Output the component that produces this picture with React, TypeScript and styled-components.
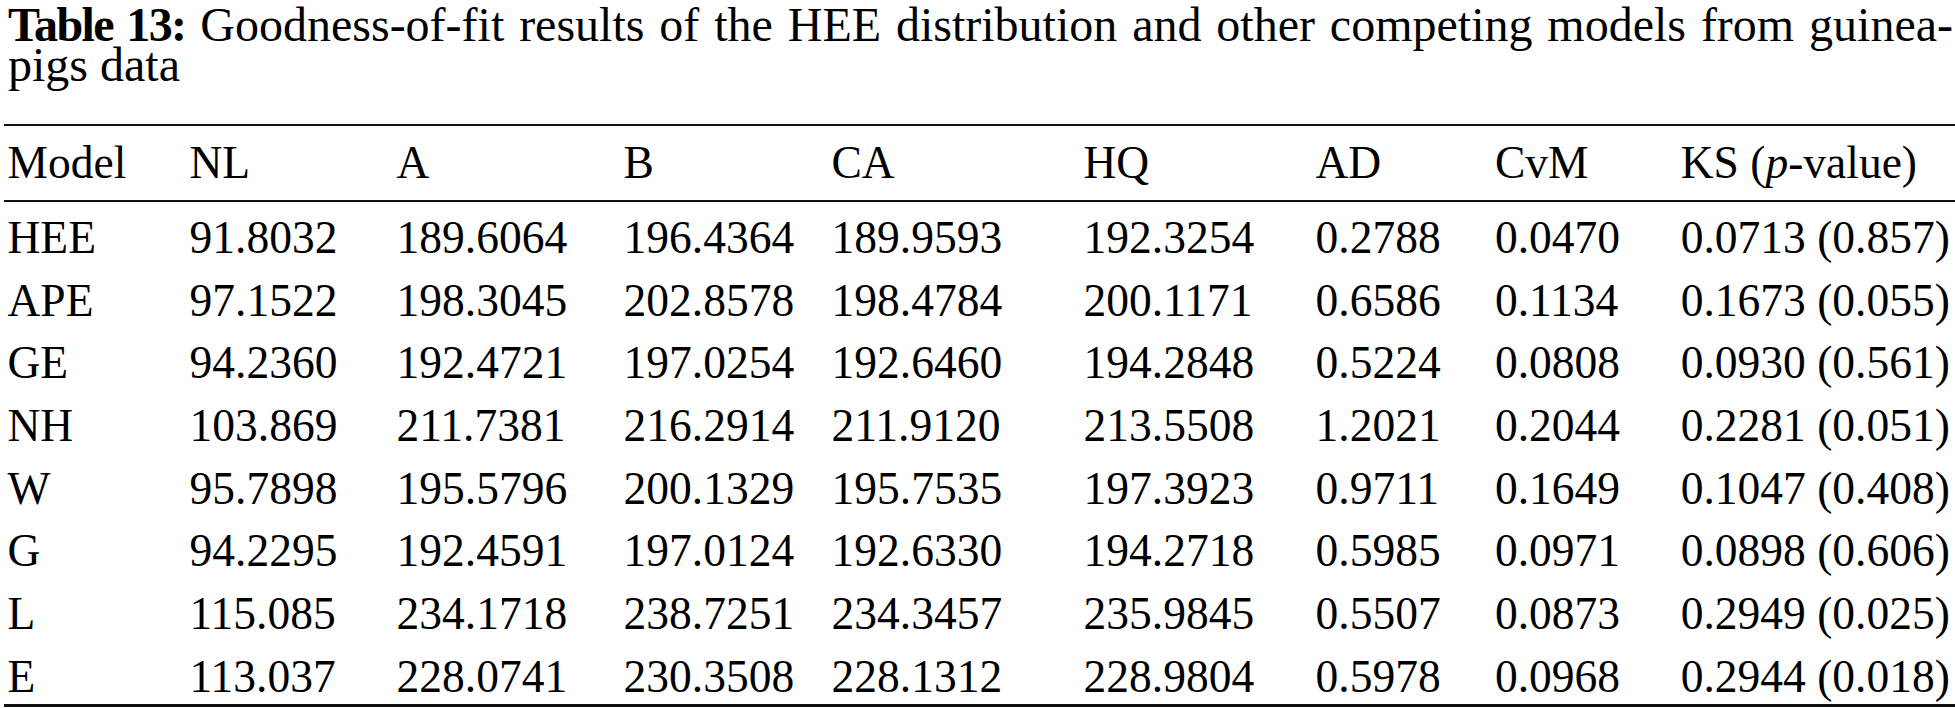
import styled, { createGlobalStyle } from "styled-components";

const GlobalStyle = createGlobalStyle`
  html, body {
    margin: 0;
    padding: 0;
    background: #ffffff;
    overflow: hidden;
  }
`;

const COLUMNS = "182px 207px 227px 208px 252px 232px 179.4px 185.8px 1fr";

const rows: string[][] = [
  ["HEE", "91.8032", "189.6064", "196.4364", "189.9593", "192.3254", "0.2788", "0.0470", "0.0713 (0.857)"],
  ["APE", "97.1522", "198.3045", "202.8578", "198.4784", "200.1171", "0.6586", "0.1134", "0.1673 (0.055)"],
  ["GE", "94.2360", "192.4721", "197.0254", "192.6460", "194.2848", "0.5224", "0.0808", "0.0930 (0.561)"],
  ["NH", "103.869", "211.7381", "216.2914", "211.9120", "213.5508", "1.2021", "0.2044", "0.2281 (0.051)"],
  ["W", "95.7898", "195.5796", "200.1329", "195.7535", "197.3923", "0.9711", "0.1649", "0.1047 (0.408)"],
  ["G", "94.2295", "192.4591", "197.0124", "192.6330", "194.2718", "0.5985", "0.0971", "0.0898 (0.606)"],
  ["L", "115.085", "234.1718", "238.7251", "234.3457", "235.9845", "0.5507", "0.0873", "0.2949 (0.025)"],
  ["E", "113.037", "228.0741", "230.3508", "228.1312", "228.9804", "0.5978", "0.0968", "0.2944 (0.018)"],
];

export default function App() {
  return (
    <Page>
      <GlobalStyle />
      <Caption>
        <CaptionLine $justify>
          <Label>Table 13:</Label> Goodness-of-fit results of the HEE
          distribution and other competing models from guinea-
        </CaptionLine>
        <CaptionLine>pigs data</CaptionLine>
      </Caption>
      <Table>
        <HeaderRow>
          <Cell>Model</Cell>
          <Cell>NL</Cell>
          <Cell>A</Cell>
          <Cell>B</Cell>
          <Cell>CA</Cell>
          <Cell>HQ</Cell>
          <Cell>AD</Cell>
          <Cell>CvM</Cell>
          <Cell>
            KS (<i>p</i>-value)
          </Cell>
        </HeaderRow>
        <Body>
          {rows.map((row) => (
            <Row key={row[0]}>
              {row.map((value, i) => (
                <Cell key={i}>{value}</Cell>
              ))}
            </Row>
          ))}
        </Body>
      </Table>
    </Page>
  );
}

const Page = styled.div`
  width: 1955px;
  color: #000000;
  font-family: "Liberation Serif", "Times New Roman", serif;
`;

const Caption = styled.div`
  padding: 5px 2px 0 8px;
  height: 80px;
  font-size: 48px;
  line-height: 40px;
`;

const CaptionLine = styled.div<{ $justify?: boolean }>`
  text-align: ${(p) => (p.$justify ? "justify" : "left")};
  text-align-last: ${(p) => (p.$justify ? "justify" : "auto")};
  white-space: ${(p) => (p.$justify ? "normal" : "nowrap")};
`;

const Label = styled.b`
  font-weight: 700;
  letter-spacing: -1.6px;
`;

const Table = styled.div`
  margin: 39px 0 0 4px;
  border-top: 2px solid #111111;
  border-bottom: 3px solid #111111;
  font-size: 45.5px;
  line-height: 42px;
`;

const HeaderRow = styled.div`
  display: grid;
  grid-template-columns: ${COLUMNS};
  align-items: center;
  height: 74px;
  border-bottom: 2px solid #111111;
`;

const Body = styled.div`
  display: flex;
  flex-direction: column;
`;

const Row = styled.div`
  display: grid;
  grid-template-columns: ${COLUMNS};
  height: 62.7px;
  padding-top: 15px;
  box-sizing: border-box;
`;

const Cell = styled.div`
  padding-left: 3.5px;
  white-space: nowrap;

  i {
    font-style: italic;
  }
`;
